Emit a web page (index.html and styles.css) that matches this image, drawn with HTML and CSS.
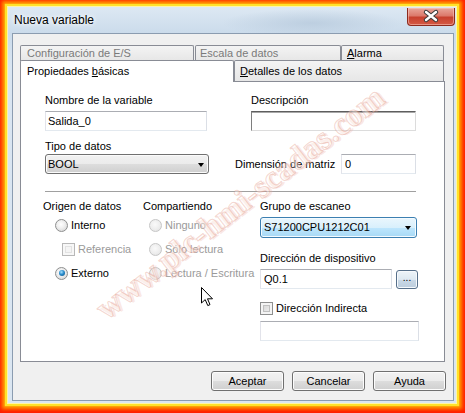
FILE: index.html
```html
<!DOCTYPE html>
<html lang="es">
<head>
<meta charset="utf-8">
<title>Nueva variable</title>
<link rel="stylesheet" href="styles.css">
</head>
<body>
<div class="screen">
  <div class="window">
    <div class="titlebar">
      <span class="title">Nueva variable</span>
      <div class="close">
        <svg width="48" height="18" viewBox="0 0 48 18">
          <path d="M19 5 L29 13 M29 5 L19 13" stroke="#3a3a3a" stroke-width="4.4" stroke-linecap="round"/>
          <path d="M19 5 L29 13 M29 5 L19 13" stroke="#ffffff" stroke-width="2.4" stroke-linecap="round"/>
        </svg>
      </div>
    </div>
    <div class="client">
      <div class="tabrow back">
        <div class="tab w1 dim-text">Configuración de E/S</div>
        <div class="tab w2 dim-text">Escala de datos</div>
        <div class="tab w3"><u>A</u>larma</div>
      </div>
      <div class="tabrow front">
        <div class="tab active w4">Propiedades <u>b</u>ásicas</div>
        <div class="tab w5"><u>D</u>etalles de los datos</div>
      </div>
      <div class="panel">
        <div class="grid-top">
          <div class="field">
            <div class="label">Nombre de la variable</div>
            <div class="textbox name">Salida_0</div>
          </div>
          <div class="field desc">
            <div class="label">Descripción</div>
            <div class="textbox sunken"></div>
          </div>
          <div class="field">
            <div class="label gap8">Tipo de datos</div>
            <div class="combo bool"><span>BOOL</span><i class="arrow"></i></div>
          </div>
          <div class="dimrow">
            <span class="label">Dimensión de matriz</span>
            <div class="textbox dimbox">0</div>
          </div>
        </div>
        <div class="separator"></div>
        <div class="lower">
          <div class="col c1">
            <div class="label">Origen de datos</div>
            <div class="opt"><span class="radio"></span><span>Interno</span></div>
            <div class="opt sub disabled"><span class="check off"></span><span>Referencia</span></div>
            <div class="opt"><span class="radio checked"></span><span>Externo</span></div>
          </div>
          <div class="col c2">
            <div class="label">Compartiendo</div>
            <div class="opt disabled"><span class="radio off"></span><span>Ninguno</span></div>
            <div class="opt disabled"><span class="radio off"></span><span>Sólo lectura</span></div>
            <div class="opt disabled"><span class="radio off"></span><span>Lectura / Escritura</span></div>
          </div>
          <div class="col c3">
            <div class="label">Grupo de escaneo</div>
            <div class="combo hot"><span>S71200CPU1212C01</span><i class="arrow"></i></div>
            <div class="label mt13">Dirección de dispositivo</div>
            <div class="addr">
              <div class="textbox addrbox">Q0.1</div>
              <div class="dots">...</div>
            </div>
            <div class="opt chk"><span class="check"></span><span>Dirección Indirecta</span></div>
            <div class="textbox indirect"></div>
          </div>
        </div>
      </div>
      <div class="buttons">
        <div class="btn">Aceptar</div>
        <div class="btn">Cancelar</div>
        <div class="btn">Ayuda</div>
      </div>
    </div>
  </div>
  <div class="watermark">www.plc-hmi-scadas.com</div>
  <svg class="cursor" width="13" height="20" viewBox="0 0 13 20">
    <path d="M0.5 0.5 L0.5 16 L4.2 12.6 L6.8 18.6 L9 17.6 L6.5 11.8 L11.5 11.8 Z" fill="#ffffff" stroke="#000000" stroke-width="1" stroke-linejoin="miter"/>
  </svg>
</div>
</body>
</html>
```

FILE: styles.css
```css
* { box-sizing: border-box; }

body {
  margin: 0;
  font-family: "Liberation Sans", Arial, sans-serif;
  font-size: 11px;
  color: #000;
}

.screen {
  position: relative;
  width: 465px;
  height: 413px;
  overflow: hidden;
  padding: 7px 9px 10px 8px;
  background: #ff1a00;
}

.window {
  width: 448px;
  height: 396px;
  display: flex;
  flex-direction: column;
  padding: 0 2px 2px 4px;
  background: linear-gradient(to bottom, #dde8f3 0%, #cbdbeb 26px, #d9e5f1 60px, #dbe6f1 100%);
  box-shadow: 0 0 0 1px #fff4a8, 0 0 1px 3px #ffe22a, 0 0 3px 5px #ff9d00, 0 0 4px 7px #ff5a00;
}

.titlebar {
  height: 26px;
  display: flex;
  justify-content: space-between;
  align-items: flex-start;
  padding-left: 2px;
  background: radial-gradient(ellipse 90px 14px at 300px 16px, rgba(175, 195, 215, 0.6), rgba(175, 195, 215, 0) 100%);
}

.title {
  margin-top: 6px;
  font-size: 12px;
  line-height: 14px;
  text-shadow: 0 0 4px #ffffff, 0 0 6px #ffffff;
}

.close {
  width: 48px;
  height: 18px;
  margin-top: 1px;
  margin-right: -1px;
  border: 1px solid #8c2a1e;
  border-top: none;
  border-radius: 0 0 4px 4px;
  background: linear-gradient(to bottom, #e9a79b 0%, #dc7a6c 45%, #c8412f 55%, #d45a45 100%);
  box-shadow: inset 0 0 0 1px rgba(255, 210, 200, 0.5);
}
.close svg { display: block; margin: -1px 0 0 -1px; }

.client {
  height: 368px;
  border: 1px solid #8b9cb0;
  background: #f0f0f0;
  padding: 11px 7px 0 7px;
  display: flex;
  flex-direction: column;
}

.tabrow { display: flex; }

.tab {
  border: 1px solid #898c95;
  border-radius: 2px 2px 0 0;
  background: linear-gradient(to bottom, #f4f4f4, #e6e6e6);
  line-height: 14px;
  white-space: nowrap;
  padding-left: 6px;
}

.back .tab { height: 16px; border-bottom: none; }
.w1 { width: 174px; }
.w2 { width: 146px; margin-left: 1px; padding-left: 4px; }
.w3 { width: 103px; padding-left: 5px; }
.dim-text { color: #7a7a7a; }

.front { margin-top: -1px; }
.front .tab { height: 22px; padding-top: 3px; border-bottom: none; }
.w4 { width: 214px; }
.w5 { width: 210px; padding-left: 5px; }
.tab.active {
  background: #ffffff;
  position: relative;
  z-index: 2;
}

.panel {
  position: relative;
  z-index: 1;
  width: 425px;
  height: 281px;
  margin-top: -1px;
  border: 1px solid #898c95;
  background: #ffffff;
  padding: 11px 0 0 24px;
}

.label {
  line-height: 14px;
  height: 14px;
  white-space: nowrap;
}

.grid-top {
  display: grid;
  grid-template-columns: 163px 181px;
  column-gap: 27px;
}

.field { display: flex; flex-direction: column; }
.field.desc { padding-left: 16px; }

.textbox {
  height: 20px;
  border: 1px solid;
  border-color: #abadb3 #dbdfe6 #e3e9ef #e2e3ea;
  background: #ffffff;
  padding-left: 2px;
  line-height: 18px;
}
.field .textbox { margin-top: 4px; }
.name { width: 162px; }
.sunken {
  width: 165px;
  border-color: #5e5e5e #dcdcdc #dcdcdc #7e7e7e;
  box-shadow: inset 0 1px 0 #a8a8a8;
}

.gap8 { margin-top: 8px; }

.combo {
  position: relative;
  height: 20px;
  border: 1px solid #707070;
  border-radius: 3px;
  background: linear-gradient(to bottom, #f2f2f2 0%, #ebebeb 50%, #dddddd 51%, #cfcfcf 100%);
  box-shadow: inset 0 0 0 1px #fbfbfb;
  padding-left: 2px;
  line-height: 18px;
}
.combo.bool { width: 164px; margin-top: 1px; }
.arrow {
  position: absolute;
  right: 4px;
  top: 8px;
  width: 0;
  height: 0;
  border-left: 3.5px solid transparent;
  border-right: 3.5px solid transparent;
  border-top: 4px solid #000;
}

.dimrow {
  display: flex;
  align-items: center;
  align-self: end;
  height: 20px;
  justify-content: space-between;
}
.dimbox { width: 75px; padding-left: 3px; }

.separator {
  width: 371px;
  height: 1px;
  margin-top: 17px;
  background: #a0a0a0;
}

.lower {
  display: flex;
  margin-left: -2px;
  margin-top: 7px;
}
.c1 { width: 100px; }
.c2 { width: 117px; }
.c3 { width: 158px; display: flex; flex-direction: column; }

.opt {
  height: 24px;
  display: flex;
  align-items: center;
  gap: 3px;
  white-space: nowrap;
}
.c1 .opt { padding-left: 12px; }
.c1 .opt.sub { padding-left: 19px; }
.c2 .opt { padding-left: 6px; }
.disabled { color: #9a9a9a; }

.radio {
  position: relative;
  width: 13px;
  height: 13px;
  flex: none;
  border-radius: 50%;
  border: 1px solid #8e8f8f;
  background: radial-gradient(circle at 45% 40%, #ffffff 0%, #f0f0f0 40%, #cfcfcf 100%);
}
.radio.off {
  border-color: #c6c6c6;
  background: radial-gradient(circle at 45% 40%, #fafafa 0%, #ececec 60%, #dcdcdc 100%);
}
.radio.checked::after {
  content: "";
  position: absolute;
  left: 2.5px;
  top: 2.5px;
  width: 6px;
  height: 6px;
  border-radius: 50%;
  background: radial-gradient(circle at 40% 35%, #a8e2ff 0%, #2a8ccc 45%, #0c4f80 100%);
}

.check {
  width: 13px;
  height: 13px;
  flex: none;
  border: 1px solid #8e8f8f;
  background: linear-gradient(135deg, #cfcfcf, #f6f6f6);
  box-shadow: inset 0 0 0 2px #f4f4f4, inset 0 0 0 3px #c0c0c0;
}
.check.off {
  border-color: #b8b8b8;
  background: #f4f4f4;
  box-shadow: inset 0 0 0 2px #f7f7f7, inset 0 0 0 3px #e2e2e2;
}

.combo.hot {
  width: 157px;
  height: 21px;
  margin-top: 4px;
  border-color: #3c7fb1;
  background: linear-gradient(to bottom, #eaf6fd 0%, #d9f0fc 50%, #bee6fd 51%, #a7d9f5 100%);
  box-shadow: inset 0 0 0 1px #f4fbff;
  padding-left: 3px;
  line-height: 19px;
}
.combo.hot .arrow { top: 8px; right: 5px; }

.mt13 { margin-top: 13px; }

.addr {
  display: flex;
  align-items: center;
  gap: 4px;
  margin-top: 4px;
}
.addrbox { width: 132px; padding-left: 3px; }
.dots {
  width: 22px;
  height: 19px;
  border: 1px solid #566f8a;
  border-radius: 3px;
  background: linear-gradient(to bottom, #eef4f9 0%, #dde8f1 50%, #c9d8e6 51%, #bccddd 100%);
  box-shadow: inset 0 0 0 1px #f6f9fc;
  text-align: center;
  line-height: 14px;
  font-size: 10px;
}

.opt.chk { height: 14px; margin-top: 12px; }
.indirect { width: 159px; margin-top: 6px; }

.buttons {
  display: flex;
  justify-content: flex-end;
  gap: 8px;
  margin-top: 9px;
}
.btn {
  width: 73px;
  height: 20px;
  border: 1px solid #707070;
  border-radius: 3px;
  background: linear-gradient(to bottom, #f2f2f2 0%, #ebebeb 50%, #dddddd 51%, #cfcfcf 100%);
  box-shadow: inset 0 0 0 1px #fcfcfc;
  text-align: center;
  line-height: 18px;
}

.watermark {
  position: absolute;
  z-index: 5;
  left: 240px;
  top: 203px;
  transform: translate(-50%, -50%) rotate(-38deg);
  font-family: "Liberation Serif", "Times New Roman", serif;
  font-weight: bold;
  font-size: 33px;
  white-space: nowrap;
  color: rgba(255, 250, 248, 0.4);
  -webkit-text-stroke: 1px rgba(215, 120, 100, 0.3);
  text-shadow: 2px 2px 0 rgba(238, 180, 165, 0.3);
  pointer-events: none;
}

.cursor {
  position: absolute;
  z-index: 6;
  left: 201px;
  top: 287px;
}
```
